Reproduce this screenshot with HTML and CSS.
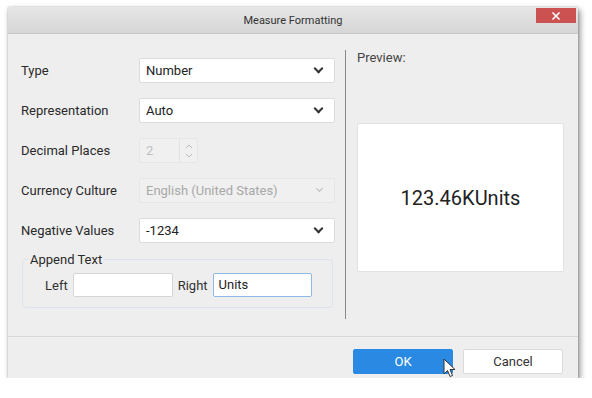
FILE: index.html
```html
<!DOCTYPE html>
<html lang="en">
  <head>
    <meta charset="UTF-8" />
    <title>Measure Formatting</title>
    <link rel="stylesheet" href="styles.css">
  </head>
  <body>
    <div class="dialog">
      <div class="titlebar">
        <span class="title">Measure Formatting</span>
        <button class="close" type="button">
          <svg width="10" height="10" viewBox="0 0 10 10"><path d="M1.5 1.5 L8.5 8.5 M8.5 1.5 L1.5 8.5" stroke="#fff" stroke-width="1.6"/></svg>
        </button>
      </div>

      <div class="content">
        <div class="settings">
          <div class="row">
            <label>Type</label>
            <div class="select"><span>Number</span><i class="chev"></i></div>
          </div>
          <div class="row">
            <label>Representation</label>
            <div class="select"><span>Auto</span><i class="chev"></i></div>
          </div>
          <div class="row">
            <label>Decimal Places</label>
            <div class="spinner">
              <span class="spin-value">2</span>
              <span class="spin-arrows">
                <svg width="10" height="20" viewBox="0 0 10 20"><path d="M2 7 L5 4 L8 7 M2 13 L5 16 L8 13" fill="none" stroke="#bbb" stroke-width="1"/></svg>
              </span>
            </div>
          </div>
          <div class="row">
            <label>Currency Culture</label>
            <div class="select disabled"><span>English (United States)</span><i class="chev"></i></div>
          </div>
          <div class="row">
            <label>Negative Values</label>
            <div class="select"><span>-1234</span><i class="chev"></i></div>
          </div>
          <fieldset class="append">
            <legend>Append Text</legend>
            <div class="append-row">
              <label>Left</label>
              <div class="text-box"></div>
              <label>Right</label>
              <div class="text-box focused">Units</div>
            </div>
          </fieldset>
        </div>

        <div class="divider"></div>

        <div class="preview">
          <div class="preview-label">Preview:</div>
          <div class="preview-box">123.46KUnits</div>
        </div>
      </div>

      <div class="footer">
        <button class="btn primary" type="button">OK</button>
        <button class="btn" type="button">Cancel</button>
        <svg class="cursor" width="14" height="20" viewBox="0 0 14 20"><path d="M1 1 L1 16 L4.5 12.5 L7 18.5 L9.5 17.5 L7 11.5 L12 11.5 Z" fill="#fff" stroke="#333" stroke-width="1"/></svg>
      </div>
    </div>
  </body>
</html>
```

FILE: styles.css
```css
body {
  margin: 0;
  background: #fff;
  font-family: Roboto, "Liberation Sans", sans-serif;
  font-size: 13px;
  color: #333;
}
.dialog {
  width: 570px;
  height: 371px;
  margin: 7px 0 0 8px;
  background: #eeeeee;
  box-shadow: 2px 3px 6px rgba(0, 0, 0, 0.45), 0 0 2px rgba(0, 0, 0, 0.2);
  display: flex;
  flex-direction: column;
}
.titlebar {
  height: 26px;
  background: linear-gradient(#e6e6e6, #d6d6d6);
  border-bottom: 1px solid #c8c8c8;
  display: flex;
  align-items: center;
  justify-content: center;
  position: relative;
}
.title {
  font-size: 11px;
  color: #333;
}
.close {
  position: absolute;
  top: 1px;
  right: 2px;
  width: 40px;
  height: 15px;
  border: none;
  padding: 0;
  background: #cc5252;
  display: flex;
  align-items: center;
  justify-content: center;
}
.content {
  height: 302px;
  display: flex;
  border-bottom: 1px solid #d8d8d8;
}
.settings {
  width: 314px;
  flex-shrink: 0;
  padding: 24px 10px 0 13px;
  display: flex;
  flex-direction: column;
  gap: 15px;
}
.row {
  display: flex;
  align-items: center;
  height: 25px;
}
.row label {
  width: 118px;
  flex-shrink: 0;
  color: #2a2a2a;
}
.select {
  box-sizing: border-box;
  flex-shrink: 0;
  width: 196px;
  height: 25px;
  background: #fff;
  border: 1px solid #dcdcdc;
  border-radius: 2px;
  display: flex;
  align-items: center;
  justify-content: space-between;
  padding-left: 6px;
}
.select span {
  color: #222;
}
.chev {
  width: 5px;
  height: 5px;
  border-right: 2px solid #333;
  border-bottom: 2px solid #333;
  transform: rotate(45deg);
  margin: 0 12px 4px 0;
}
.select.disabled {
  background: #f0f0f0;
  border-color: #e6e6e6;
}
.select.disabled span {
  color: #a8a8a8;
}
.select.disabled .chev {
  width: 4px;
  height: 4px;
  border-width: 1px;
  border-color: #bbb;
}
.spinner {
  width: 57px;
  height: 23px;
  border: 1px solid #e6e6e6;
  border-radius: 2px;
  background: #f0f0f0;
  display: flex;
}
.spin-value {
  width: 33px;
  padding-left: 6px;
  line-height: 23px;
  color: #c0c0c0;
}
.spin-arrows {
  flex: 1;
  border-left: 1px solid #e2e2e2;
  display: flex;
  align-items: center;
  justify-content: center;
}
.append {
  margin: -6px 2px 0 1px;
  padding: 0 0 10px 0;
  border: 1px solid #dde3ea;
  border-radius: 3px;
}
.append legend {
  padding: 0 2px;
  margin-left: 5px;
  line-height: 15px;
  color: #2a2a2a;
}
.append-row {
  display: flex;
  align-items: center;
  padding: 6px 0 0 22px;
}
.append-row label {
  margin-right: 5px;
}
.text-box {
  box-sizing: border-box;
  width: 100px;
  height: 24px;
  line-height: 22px;
  padding-left: 5px;
  background: #fff;
  border: 1px solid #d6d6d6;
  border-radius: 2px;
  margin-right: 5px;
  color: #222;
}
.text-box.focused {
  width: 99px;
  border-color: #8cb9e6;
}
.divider {
  width: 1px;
  background: #8a8a8a;
  margin: 16px 0 17px 0;
}
.preview {
  padding: 16px 0 0 11px;
  display: flex;
  flex-direction: column;
}
.preview-label {
  color: #444;
  height: 16px;
}
.preview-box {
  margin-top: 57px;
  width: 205px;
  height: 147px;
  background: #fff;
  border: 1px solid #e2e2e2;
  border-radius: 2px;
  display: flex;
  align-items: center;
  justify-content: center;
  font-size: 20px;
  color: #222;
}
.footer {
  flex: 1;
  display: flex;
  justify-content: flex-end;
  align-items: flex-start;
  padding: 12px 15px 0 0;
  gap: 10px;
  position: relative;
}
.btn {
  width: 100px;
  height: 25px;
  border: 1px solid #dadada;
  border-radius: 2px;
  background: #fff;
  font-family: Roboto, "Liberation Sans", sans-serif;
  font-size: 13px;
  color: #333;
  padding: 0;
}
.btn.primary {
  background: #2a8ae3;
  border-color: #2a8ae3;
  color: #fff;
}
.cursor {
  position: absolute;
  left: 435px;
  top: 21px;
}
```
